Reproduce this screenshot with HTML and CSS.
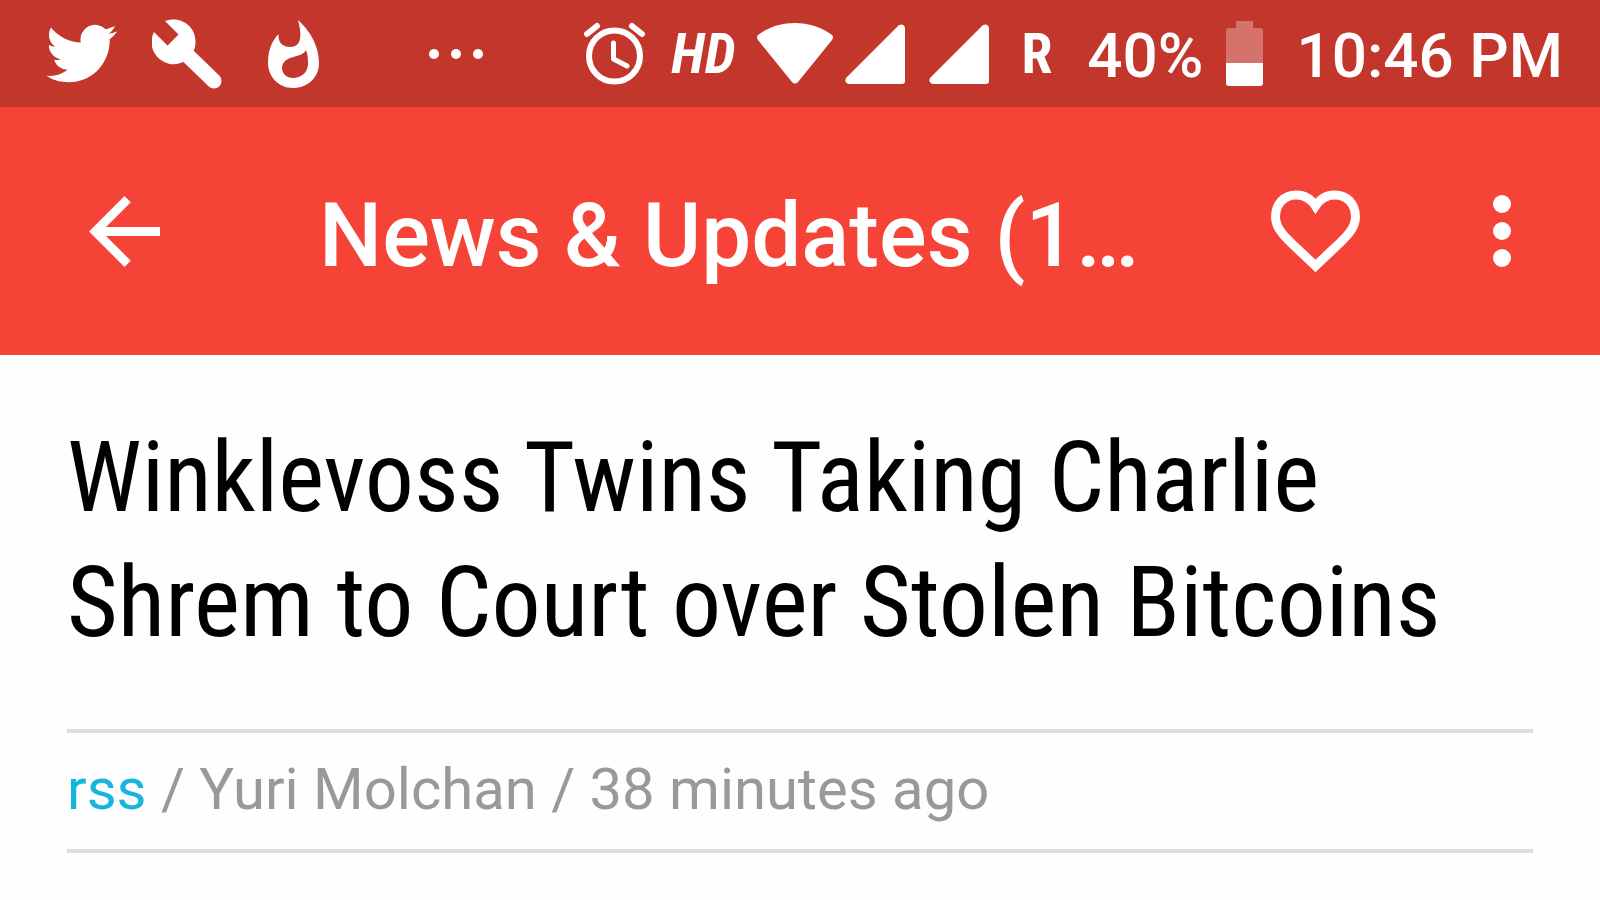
FILE: index.html
```
<!DOCTYPE html>
<html lang="en">
<head>
    <meta charset="UTF-8">
    <meta name="viewport" content="width=device-width, initial-scale=1.0">
    <title>News &amp; Updates</title>
    <link rel="stylesheet" href="styles.css">
</head>

<body>
    <div class="status_bar">
        <div class="notifications">
            <svg class="twitter" viewBox="0 2 24 20" width="71" height="59"><path d="M23.953 4.57a10 10 0 01-2.825.775 4.958 4.958 0 002.163-2.723c-.951.555-2.005.959-3.127 1.184a4.92 4.92 0 00-8.384 4.482C7.69 8.095 4.067 6.13 1.64 3.162a4.822 4.822 0 00-.666 2.475c0 1.71.87 3.213 2.188 4.096a4.904 4.904 0 01-2.228-.616v.06a4.923 4.923 0 003.946 4.827 4.996 4.996 0 01-2.212.085 4.936 4.936 0 004.604 3.417 9.867 9.867 0 01-6.102 2.105c-.39 0-.779-.023-1.17-.067a13.995 13.995 0 007.557 2.209c9.053 0 13.998-7.496 13.998-13.985 0-.21 0-.42-.015-.63A9.935 9.935 0 0024 4.59z"/></svg>
            <svg class="wrench" viewBox="0 0 70 70" width="70" height="70">
                <path d="M13 2C25-3 43 4 43.500 22A22 22 0 1 1 2 13L15.500 26.500L26.500 15.500Z"/>
                <path class="line" stroke-width="15" d="M30 31L62 62"/>
            </svg>
            <svg class="flame" viewBox="0 0 51 68" width="51" height="68"><path fill-rule="evenodd" d="M30 0C40 9 51 24 51 43C51 58 39 68 25 68C11 68 0 57 0 43C0 30 4 21 10.500 14C10 22 14 27 22 27C34 27 34 15 30 0ZM38 30C34 39 15 34 14 48C14 54 19 58 25 58C33 58 39 53 40 45C40 40 40 35 38 30Z"/></svg>
            <svg class="more_dots" viewBox="0 0 54 10" width="54" height="10"><circle cx="5" cy="5" r="5"/><circle cx="27" cy="5" r="5"/><circle cx="49" cy="5" r="5"/></svg>
        </div>
        <div class="system">
            <svg class="alarm" viewBox="0 0 61 63" width="61" height="63">
                <circle class="line" cx="30.500" cy="34" r="25.500" stroke-width="6"/>
                <path class="line" stroke-width="5" d="M29.500 21V37L43 44"/>
                <path class="line" stroke-width="6" d="M3 12L13 4M48 4L58 12"/>
            </svg>
            <span class="hd">HD</span>
            <svg class="wifi" viewBox="0 0 76 61" width="76" height="61"><path d="M1 12C22-4 54-4 75 12Q77 14 75 17L41 59Q38 62 35 59L1 17Q-1 14 1 12Z"/></svg>
            <svg class="signal" viewBox="0 0 60 60" width="60" height="60"><path d="M1 54L54 1Q59-1 60 4V57Q60 60 57 60H4Q-1 59 1 54Z"/></svg>
            <svg class="signal" viewBox="0 0 60 60" width="60" height="60"><path d="M1 54L54 1Q59-1 60 4V57Q60 60 57 60H4Q-1 59 1 54Z"/></svg>
            <span class="roaming">R</span>
            <span class="percent">40%</span>
            <svg class="battery" viewBox="0 0 37 65" width="37" height="65">
                <path fill-opacity=".3" d="M10 0H27V7H34Q37 7 37 10V42H0V10Q0 7 3 7H10Z"/>
                <path d="M0 42H37V62Q37 65 34 65H3Q0 65 0 62Z"/>
            </svg>
            <span class="clock">10:46 PM</span>
        </div>
    </div>

    <header class="app_bar">
        <button class="back" aria-label="Back"><svg viewBox="4 4 16 16" width="71" height="71"><path d="M20 11H7.830l5.590-5.590L12 4l-8 8 8 8 1.410-1.410L7.830 13H20z"/></svg></button>
        <h1>News &amp; Updates (1…</h1>
        <button class="like" aria-label="Favorite"><svg viewBox="0 0 89 82" width="89" height="82"><path class="heart" d="M44.500 16C40 9 33 5 25 5C13 5 4.500 14 4.500 27C4.500 42 20 52 44.500 76C69 52 84.500 42 84.500 27C84.500 14 76 5 64 5C56 5 49 9 44.500 16Z"/></svg></button>
        <button class="menu" aria-label="More options"><svg viewBox="0 0 18 72" width="18" height="72"><circle cx="9" cy="9" r="9"/><circle cx="9" cy="36" r="9"/><circle cx="9" cy="63" r="9"/></svg></button>
    </header>

    <main class="article">
        <h2>Winklevoss Twins Taking Charlie Shrem to Court over Stolen Bitcoins</h2>
        <div class="meta"><a href="#">rss</a> / Yuri Molchan / 38 minutes ago</div>
    </main>
</body>
</html>
```
FILE: styles.css
```
body{
    margin:0;
    background-color: #fefefe;
    font-family: Roboto, sans-serif;
}
svg{
    display: block;
    flex: none;
    fill: white;
}
.line{
    fill: none;
    stroke: white;
    stroke-linecap: round;
    stroke-linejoin: round;
}
.status_bar{
    display: flex;
    justify-content: space-between;
    height: 107px;
    padding: 0 37px 0 46px;
    background-color: #c2362c;
    color: white;
    font-size: 62px;
    font-weight: 500;
    white-space: nowrap;
}
.notifications, .system{
    display: flex;
    align-items: center;
}
.wrench{
    margin-left: 35px;
}
.flame{
    margin-left: 46px;
}
.more_dots{
    margin-left: 110px;
}
.hd, .roaming{
    font-family: "Roboto Condensed", "Liberation Sans Narrow", Roboto, sans-serif;
    font-size: 56px;
    font-weight: 700;
}
.hd{
    margin: 0 22px 0 26px;
    font-style: italic;
}
.signal{
    margin-left: 12px;
}
.signal + .signal{
    margin-left: 24px;
}
.roaming{
    margin: 0 35px 0 32px;
}
.percent, .clock{
    padding-top: 4px;
}
.battery{
    margin: 0 34px 0 22px;
}

.app_bar{
    display: flex;
    align-items: center;
    height: 248px;
    padding: 0 89px;
    background-color: #f54337;
    color: white;
}
.app_bar button{
    flex: none;
    margin: 0;
    padding: 0;
    border: none;
    background: none;
}
.app_bar h1{
    flex: 1;
    margin: 0 0 0 159px;
    padding-top: 8px;
    font-size: 89px;
    font-weight: 500;
    white-space: nowrap;
}
.heart{
    fill: none;
    stroke: white;
    stroke-width: 9;
}
.app_bar .menu{
    margin-left: 133px;
}

.article{
    padding: 60px 67px 0;
}
.article h2{
    margin: 0;
    color: black;
    font-family: "Roboto Condensed", "Liberation Sans Narrow", Roboto, sans-serif;
    font-size: 98px;
    font-weight: 400;
    line-height: 125px;
}
.meta{
    margin-top: 64px;
    padding-bottom: 4px;
    border-top: 4px solid #ddd;
    border-bottom: 4px solid #ddd;
    color: #999;
    font-size: 58px;
    line-height: 112px;
}
.meta a{
    color: #17b4de;
    text-decoration: none;
}
```
